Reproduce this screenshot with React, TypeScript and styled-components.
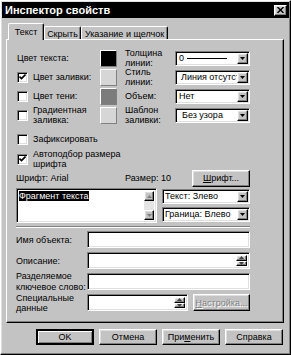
import styled, { createGlobalStyle, css } from 'styled-components'
import { FC, ReactNode } from 'react'

const FACE = '#c3c3c3'
const SHADOW = '#808080'
const LIGHT = '#dfdfdf'

const GlobalStyle = createGlobalStyle`
  html, body {
    margin: 0;
    padding: 0;
    background: ${FACE};
  }
  body {
    font-family: 'Liberation Sans', Arial, sans-serif;
    font-size: 9px;
    color: #000;
  }
`

const raised = css`
  border: 1px solid;
  border-color: #fff #000 #000 #fff;
  box-shadow: inset -1px -1px ${SHADOW}, inset 1px 1px ${LIGHT};
`
const sunken = css`
  border: 1px solid;
  border-color: ${SHADOW} #fff #fff ${SHADOW};
  box-shadow: inset 1px 1px #000, inset -1px -1px ${LIGHT};
`

const DownArrow: FC<{ color?: string }> = ({ color = '#000' }) => (
  <svg width="5" height="3" viewBox="0 0 5 3">
    <path d="M0 0H5L2.5 3Z" fill={color} />
  </svg>
)
const UpArrow: FC<{ color?: string }> = ({ color = '#000' }) => (
  <svg width="5" height="3" viewBox="0 0 5 3">
    <path d="M0 3H5L2.5 0Z" fill={color} />
  </svg>
)

interface DropdownProps {
  width: number
  indent?: number
  children: ReactNode
}

const Dropdown: FC<DropdownProps> = ({ width, indent = 1, children }) => (
  <Select $w={width}>
    <SelectValue $indent={indent}>{children}</SelectValue>
    <ArrowButton>
      <DownArrow />
    </ArrowButton>
  </Select>
)

const Check: FC<{ checked?: boolean; children: ReactNode }> = ({ checked, children }) => (
  <CheckRow>
    <CheckBox>
      {checked && (
        <svg width="7" height="6" viewBox="0 0 7 6">
          <path d="M0.5 2.5L2.5 4.5L6.5 0.5" stroke="#000" strokeWidth="1.6" fill="none" />
        </svg>
      )}
    </CheckBox>
    <span>{children}</span>
  </CheckRow>
)

const Spinner: FC = () => (
  <SpinCol>
    <SpinButton>
      <UpArrow color="#404040" />
    </SpinButton>
    <SpinButton>
      <DownArrow color="#404040" />
    </SpinButton>
  </SpinCol>
)

const App: FC = () => (
  <>
    <GlobalStyle />
    <Window>
      <TitleBar>
        <Title>Инспектор свойств</Title>
        <CloseButton>
          <svg width="7" height="6" viewBox="0 0 7 6">
            <path d="M0.5 0L6.5 6M6.5 0L0.5 6" stroke="#000" strokeWidth="1.4" />
          </svg>
        </CloseButton>
      </TitleBar>
      <Body>
        <TabStrip>
          <Tab $active $w={36}>Текст</Tab>
          <Tab $w={37}>Скрыть</Tab>
          <Tab $w={87}>Указание и щелчок</Tab>
        </TabStrip>
        <Panel>
          <ColorGrid>
            <PlainLabel>Цвет текста:</PlainLabel>
            <Swatch $color="#000" />
            <SideLabel>Толщина<br />линии:</SideLabel>
            <Dropdown width={75} indent={2}>
              0 <LineSample />
            </Dropdown>

            <Check checked>Цвет заливки:</Check>
            <Swatch $color="#d6d6d6" />
            <SideLabel>Стиль<br />линии:</SideLabel>
            <Dropdown width={75} indent={4}>Линия отсутст</Dropdown>

            <Check>Цвет тени:</Check>
            <Swatch $color="#7c7c7c" />
            <SideLabel>Объем:</SideLabel>
            <Dropdown width={75} indent={2}>Нет</Dropdown>

            <Check>Градиентная<br />заливка:</Check>
            <Swatch $color="#d6d6d6" />
            <SideLabel>Шаблон<br />заливки:</SideLabel>
            <Dropdown width={75} indent={5}>Без узора</Dropdown>
          </ColorGrid>

          <OptionRow $top={9} $h={12}>
            <Check>Зафиксировать</Check>
          </OptionRow>
          <OptionRow $top={4} $h={20}>
            <Check checked>Автоподбор размера<br />шрифта</Check>
          </OptionRow>

          <FontRow>
            <span>Шрифт: Arial</span>
            <span>Размер: 10</span>
            <PushButton $w={58}><u>Ш</u>рифт...</PushButton>
          </FontRow>

          <TextRow>
            <TextBox>
              <TextArea>
                <Selected>Фрагмент текста</Selected>
              </TextArea>
              <ScrollBar>
                <ScrollButton>
                  <UpArrow color={SHADOW} />
                </ScrollButton>
                <ScrollTrack />
                <ScrollButton>
                  <DownArrow color={SHADOW} />
                </ScrollButton>
              </ScrollBar>
            </TextBox>
            <AlignCol>
              <Dropdown width={88}>Текст: Злево</Dropdown>
              <Dropdown width={88}>Граница: Влево</Dropdown>
            </AlignCol>
          </TextRow>

          <Separator />

          <FieldGrid>
            <FieldLabel>Имя объекта:</FieldLabel>
            <Field />

            <FieldLabel>Описание:</FieldLabel>
            <Field>
              <FieldFill />
              <Spinner />
            </Field>

            <FieldLabel $lh={11}>Разделяемое<br />ключевое слово:</FieldLabel>
            <Field />

            <FieldLabel>Специальные<br />данные</FieldLabel>
            <SpecialRow>
              <Field $w={101}>
                <FieldFill />
                <Spinner />
              </Field>
              <PushButton $w={57} $disabled><u>Н</u>астройка...</PushButton>
            </SpecialRow>
          </FieldGrid>
        </Panel>

        <ButtonRow>
          <PushButton $w={58} $h={16} $default>OK</PushButton>
          <PushButton $w={58} $h={16}>Отмена</PushButton>
          <PushButton $w={58} $h={16}>При<u>м</u>енить</PushButton>
          <PushButton $w={58} $h={16}>Справка</PushButton>
        </ButtonRow>
      </Body>
    </Window>
  </>
)

const Window = styled.div`
  box-sizing: border-box;
  width: 291px;
  height: 355px;
  padding: 1px;
  background: ${FACE};
  ${raised};
`
const TitleBar = styled.div`
  height: 16px;
  background: #000;
  display: flex;
  align-items: center;
  justify-content: space-between;
  padding: 0 2px 0 3px;
`
const Title = styled.span`
  color: #fff;
  font-weight: bold;
  font-size: 11px;
  white-space: nowrap;
`
const CloseButton = styled.div`
  box-sizing: border-box;
  width: 13px;
  height: 11px;
  background: ${FACE};
  display: flex;
  align-items: center;
  justify-content: center;
  ${raised};
`
const Body = styled.div`
  padding: 5px 4px 0 4px;
`
const TabStrip = styled.div`
  display: flex;
  align-items: flex-end;
  height: 16px;
  padding-left: 2px;
`
const Tab = styled.div<{ $active?: boolean; $w: number }>`
  box-sizing: border-box;
  position: relative;
  z-index: ${p => (p.$active ? 1 : 0)};
  width: ${p => p.$w}px;
  height: ${p => (p.$active ? 17 : 13)}px;
  margin-bottom: ${p => (p.$active ? -1 : 0)}px;
  border-top: 1px solid #fff;
  border-left: 1px solid #fff;
  border-right: 1px solid #000;
  border-radius: 2px 2px 0 0;
  box-shadow: inset -1px 0 ${SHADOW};
  background: ${FACE};
  display: flex;
  align-items: center;
  justify-content: center;
  padding-top: ${p => (p.$active ? 0 : 1)}px;
  white-space: nowrap;
`
const Panel = styled.div`
  box-sizing: border-box;
  width: 278px;
  height: 284px;
  padding: 9px 0 0 9px;
  border: 1px solid;
  border-color: #fff #000 #000 #fff;
  box-shadow: inset -1px -1px ${SHADOW};
  display: flex;
  flex-direction: column;
`
const ColorGrid = styled.div`
  display: grid;
  grid-template-columns: 84px 17px 58px 75px;
  grid-auto-rows: 18px;
  row-gap: 1px;
  align-items: center;
  width: 234px;
`
const PlainLabel = styled.span`
  padding-left: 1px;
  white-space: nowrap;
`
const SideLabel = styled.span`
  padding-left: 8px;
  line-height: 10px;
  white-space: nowrap;
  overflow: hidden;
`
const Swatch = styled.div<{ $color: string }>`
  box-sizing: border-box;
  width: 17px;
  height: 17px;
  background: ${p => p.$color};
  border: 1px solid;
  border-color: #fff ${SHADOW} ${SHADOW} #fff;
`
const Select = styled.div<{ $w: number }>`
  box-sizing: border-box;
  width: ${p => p.$w}px;
  height: 15px;
  padding: 1px;
  background: #fff;
  display: flex;
  ${sunken};
`
const SelectValue = styled.div<{ $indent: number }>`
  flex: 1;
  min-width: 0;
  padding-left: ${p => p.$indent}px;
  line-height: 11px;
  white-space: nowrap;
  display: flex;
  align-items: center;
  gap: 3px;
`
const LineSample = styled.span`
  display: inline-block;
  width: 40px;
  height: 1px;
  background: #000;
`
const ArrowButton = styled.div`
  box-sizing: border-box;
  width: 11px;
  height: 11px;
  flex-shrink: 0;
  background: ${FACE};
  display: flex;
  align-items: center;
  justify-content: center;
  ${raised};
`
const CheckRow = styled.div`
  display: flex;
  align-items: center;
  gap: 5px;
  line-height: 10px;
  white-space: nowrap;
`
const CheckBox = styled.div`
  box-sizing: border-box;
  width: 11px;
  height: 11px;
  flex-shrink: 0;
  margin-left: 1px;
  background: #fff;
  display: flex;
  align-items: center;
  justify-content: center;
  ${sunken};
`
const OptionRow = styled.div<{ $top: number; $h: number }>`
  margin-top: ${p => p.$top}px;
  height: ${p => p.$h}px;
  display: flex;
  align-items: center;
`
const FontRow = styled.div`
  display: grid;
  grid-template-columns: 109px 67px 58px;
  align-items: center;
  height: 18px;
  width: 234px;
  white-space: nowrap;
`
const PushButton = styled.div<{ $w: number; $h?: number; $disabled?: boolean; $default?: boolean }>`
  box-sizing: border-box;
  width: ${p => p.$w}px;
  height: ${p => p.$h ?? 17}px;
  background: ${FACE};
  display: flex;
  align-items: center;
  justify-content: center;
  white-space: nowrap;
  color: ${p => (p.$disabled ? SHADOW : '#000')};
  text-shadow: ${p => (p.$disabled ? '1px 1px #fff' : 'none')};
  ${raised};
  ${p =>
    p.$default &&
    css`
      border: 2px solid #000;
      box-shadow: inset 1px 1px #fff, inset -1px -1px ${SHADOW};
    `}
`
const TextRow = styled.div`
  margin-top: 1px;
  display: flex;
  gap: 5px;
  height: 35px;
`
const TextBox = styled.div`
  box-sizing: border-box;
  width: 141px;
  height: 35px;
  padding: 2px;
  background: #fff;
  display: flex;
  ${sunken};
`
const TextArea = styled.div`
  flex: 1;
  padding-top: 1px;
  line-height: 9px;
`
const Selected = styled.span`
  background: #000;
  color: #fff;
`
const ScrollBar = styled.div`
  width: 10px;
  display: flex;
  flex-direction: column;
`
const ScrollButton = styled.div`
  box-sizing: border-box;
  height: 10px;
  background: ${FACE};
  display: flex;
  align-items: center;
  justify-content: center;
  ${raised};
`
const ScrollTrack = styled.div`
  flex: 1;
  background: #e4e4e4;
`
const AlignCol = styled.div`
  display: flex;
  flex-direction: column;
  gap: 3px;
  padding-top: 1px;
`
const Separator = styled.div`
  margin-top: 3px;
  width: 234px;
  height: 0;
  border-top: 1px solid ${SHADOW};
  border-bottom: 1px solid #fff;
`
const FieldGrid = styled.div`
  margin-top: 3px;
  display: grid;
  grid-template-columns: 71px 163px;
  grid-auto-rows: 17px;
  row-gap: 4px;
  align-items: center;
`
const FieldLabel = styled.span<{ $lh?: number }>`
  line-height: ${p => p.$lh ?? 10}px;
  white-space: nowrap;
`
const Field = styled.div<{ $w?: number }>`
  box-sizing: border-box;
  width: ${p => p.$w ?? 163}px;
  height: 17px;
  padding: 2px;
  background: #fff;
  display: flex;
  ${sunken};
`
const FieldFill = styled.div`
  flex: 1;
`
const SpinCol = styled.div`
  width: 11px;
  display: flex;
  flex-direction: column;
`
const SpinButton = styled.div`
  box-sizing: border-box;
  flex: 1;
  background: ${FACE};
  display: flex;
  align-items: center;
  justify-content: center;
  ${raised};
`
const SpecialRow = styled.div`
  display: flex;
  align-items: center;
  gap: 5px;
`
const ButtonRow = styled.div`
  margin-top: 6px;
  display: flex;
  justify-content: flex-end;
  gap: 5px;
  padding-right: 2px;
`

export default App
